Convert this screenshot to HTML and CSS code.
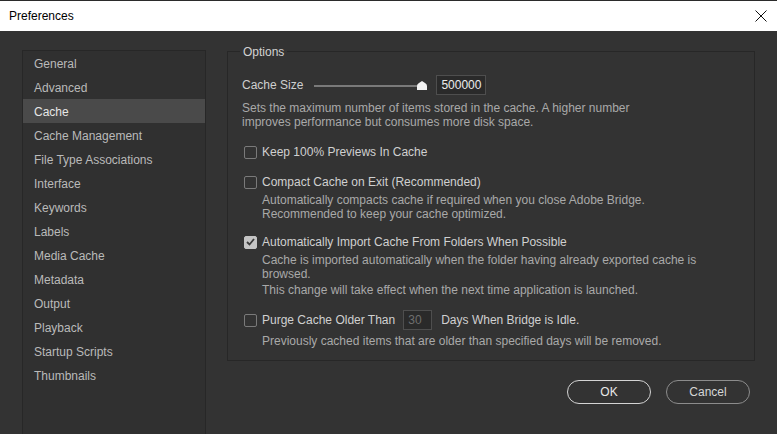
FILE: index.html
```html
<!DOCTYPE html>
<html lang="en">
<head>
  <meta charset="UTF-8">
  <title>Preferences</title>
  <link rel="stylesheet" href="styles.css">
</head>
<body>
  <!-- Title bar -->
  <header class="titlebar">
    <span class="title">Preferences</span>
    <svg class="close" width="12" height="12" viewBox="0 0 12 12">
      <path d="M0.5 0.5 L11.5 11.5 M11.5 0.5 L0.5 11.5" stroke="#111" stroke-width="1" fill="none"/>
    </svg>
  </header>

  <div class="main">
    <!-- Sidebar -->
    <ul class="sidebar">
      <li>General</li>
      <li>Advanced</li>
      <li class="active">Cache</li>
      <li>Cache Management</li>
      <li>File Type Associations</li>
      <li>Interface</li>
      <li>Keywords</li>
      <li>Labels</li>
      <li>Media Cache</li>
      <li>Metadata</li>
      <li>Output</li>
      <li>Playback</li>
      <li>Startup Scripts</li>
      <li>Thumbnails</li>
    </ul>

    <div class="content">
      <fieldset class="group">
        <legend>Options</legend>

        <div class="size-row">
          <span class="label">Cache Size</span>
          <div class="slider">
            <div class="track"></div>
            <svg class="thumb" width="10" height="9" viewBox="0 0 10 9">
              <path d="M0 9 L0 5 Q0 3 2 2 L5 0 L8 2 Q10 3 10 5 L10 9 Z" fill="#f2f2f2"/>
            </svg>
          </div>
          <div class="field wide">500000</div>
        </div>
        <p class="desc first">Sets the maximum number of items stored in the cache. A higher number<br>improves performance but consumes more disk space.</p>

        <div class="option opt-keep">
          <span class="check"></span>
          <span class="label">Keep 100% Previews In Cache</span>
        </div>

        <div class="option opt-compact">
          <span class="check"></span>
          <span class="label">Compact Cache on Exit (Recommended)</span>
        </div>
        <p class="desc">Automatically compacts cache if required when you close Adobe Bridge.<br>Recommended to keep your cache optimized.</p>

        <div class="option opt-import">
          <span class="check checked">
            <svg width="9" height="8" viewBox="0 0 9 8"><path d="M1 4 L3.5 6.5 L8 1" stroke="#3a3a3a" stroke-width="1.8" fill="none"/></svg>
          </span>
          <span class="label">Automatically Import Cache From Folders When Possible</span>
        </div>
        <p class="desc">Cache is imported automatically when the folder having already exported cache is<br>browsed.</p>
        <p class="desc note">This change will take effect when the next time application is launched.</p>

        <div class="option opt-purge">
          <span class="check"></span>
          <span class="label">Purge Cache Older Than</span>
          <div class="field days">30</div>
          <span class="label">Days When Bridge is Idle.</span>
        </div>
        <p class="desc">Previously cached items that are older than specified days will be removed.</p>
      </fieldset>

      <div class="buttons">
        <button class="btn primary">OK</button>
        <button class="btn">Cancel</button>
      </div>
    </div>
  </div>
</body>
</html>
```

FILE: styles.css
```css
/* Basic Styles */
body {
  margin: 0;
  width: 777px;
  height: 434px;
  overflow: hidden;
  background: #333333;
  font-family: "Liberation Sans", Arial, sans-serif;
  font-size: 12px;
  color: #cfcfcf;
}

/* Title bar */
.titlebar {
  height: 30px;
  background: #ffffff;
  border-top: 1px solid #2b2b2b;
  display: flex;
  align-items: center;
  justify-content: space-between;
  padding: 0 10px 0 9px;
}

.titlebar .title {
  color: #000;
  font-size: 12px;
}

/* Main area */
.main {
  display: flex;
  padding: 19px 0 0 22px;
  height: 384px;
}

.sidebar {
  list-style: none;
  margin: 0;
  padding: 0;
  width: 182px;
  height: 400px;
  border: 1px solid #272727;
  background: #303030;
}

.sidebar li {
  height: 23px;
  padding: 1px 0 0 11px;
  line-height: 24px;
  color: #bababa;
}

.sidebar li.active {
  background: #4a4a4a;
  color: #e6e6e6;
}

.content {
  margin-left: 21px;
  width: 528px;
}

/* Options group */
.group {
  margin: -8px 0 0 0;
  padding: 0 12px 0 14px;
  border: 1px solid #272727;
  box-sizing: border-box;
  height: 319px;
}

.group legend {
  padding: 2px 3px 0;
  margin-left: -2px;
  color: #d2d2d2;
  line-height: 16px;
}

.size-row {
  display: flex;
  align-items: center;
  height: 20px;
  margin-top: 15px;
}

.slider {
  position: relative;
  width: 113px;
  height: 20px;
  margin-left: 11px;
}

.track {
  position: absolute;
  left: 0;
  right: 3px;
  top: 10px;
  height: 2px;
  background: #7a7a7a;
}

.thumb {
  position: absolute;
  left: 103px;
  top: 6px;
}

.field {
  height: 18px;
  line-height: 18px;
  border: 1px solid #4e4e4e;
  background: #2a2a2a;
  padding: 0 4px;
}

.field.wide {
  width: 40px;
  margin-left: 9px;
  color: #ececec;
}

.field.days {
  width: 19px;
  color: #6e6e6e;
  margin: 0 9px 0 8px;
}

.desc {
  margin: 4px 0 0 0;
  padding-left: 20px;
  line-height: 14px;
  color: #a9a9a9;
}

.desc.first {
  padding-left: 0;
  margin-top: 6px;
}

.desc.note {
  margin-top: 2px;
}

.option {
  display: flex;
  align-items: center;
  height: 14px;
  color: #d0d0d0;
}

.opt-keep { margin-top: 16px; }
.opt-compact { margin-top: 16px; }
.opt-import { margin-top: 14px; }
.opt-purge { margin-top: 13px; height: 20px; }

.check {
  width: 11px;
  height: 11px;
  border: 1px solid #7a7a7a;
  border-radius: 2px;
  margin: 0 5px 0 2px;
  display: flex;
  align-items: center;
  justify-content: center;
}

.check.checked {
  background: #c4c4c4;
  border-color: #c4c4c4;
}

/* Buttons */
.buttons {
  display: flex;
  justify-content: flex-end;
  gap: 15px;
  margin-top: 19px;
  padding-right: 5px;
}

.btn {
  width: 84px;
  height: 24px;
  border-radius: 12px;
  border: 1px solid #8c8c8c;
  background: transparent;
  color: #d6d6d6;
  font-family: "Liberation Sans", Arial, sans-serif;
  font-size: 12px;
}

.btn.primary {
  border-color: #d4d4d4;
  color: #e8e8e8;
}
```
